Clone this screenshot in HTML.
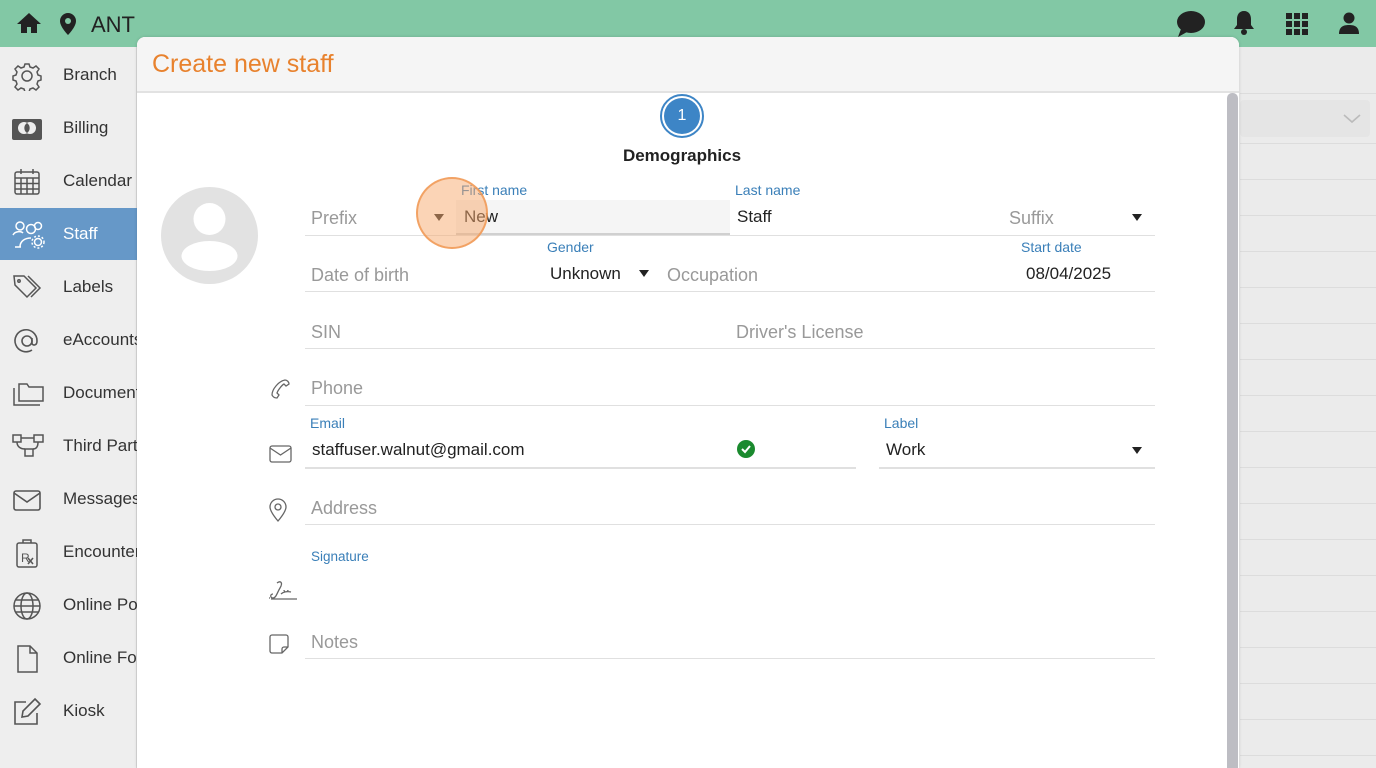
<!DOCTYPE html>
<html><head><meta charset="utf-8">
<style>
*{box-sizing:border-box;margin:0;padding:0}
body{width:1376px;height:768px;overflow:hidden;position:relative;background:#ebebeb;font-family:"Liberation Sans",Arial,sans-serif;color:#222}
.a{position:absolute}
#top{left:0;top:0;width:1376px;height:47px;background:#82c8a5}
#side{left:0;top:47px;width:137px;height:721px;background:#eeeeee;border-right:1px solid #d8d8d8}
.nav{position:absolute;left:0;width:137px;height:52px;overflow:hidden;white-space:nowrap}
.nav span{position:absolute;left:63px;top:16px;font-size:17px;color:#333}
.nav svg{position:absolute;left:12px;top:12px}
.nav.on{background:#6698c8}
.nav.on span{color:#fff}
#modal{left:137px;top:37px;width:1102px;height:731px;background:#fff;border-radius:8px 8px 0 0;box-shadow:0 0 3px rgba(0,0,0,.15)}
#mh{left:0;top:0;width:1102px;height:56px;background:#f5f5f5;border-bottom:2px solid #e2e2e2;border-radius:8px 8px 0 0}
#mh div{position:absolute;left:15px;top:13px;font-size:25px;color:#e8822e}
.ln{position:absolute;height:1px;background:#e0e0e0}
.ph{position:absolute;font-size:18px;color:#999}
.lb{position:absolute;font-size:14px;color:#3a7fb8}
.v{position:absolute;font-size:17px;color:#222}
.tri{position:absolute;width:0;height:0;border-left:5px solid transparent;border-right:5px solid transparent;border-top:7px solid #222}
.rl{position:absolute;left:1240px;width:136px;height:1px;background:#dcdcdc}
</style></head><body>
<div id="top" class="a">
<svg class="a" style="left:16px;top:12px" width="26" height="22" viewBox="0 0 26 22"><path d="M13 1L1 12h4v9h6v-6h4v6h6v-9h4z" fill="#222"/></svg>
<svg class="a" style="left:59px;top:12px" width="18" height="24" viewBox="0 0 18 24"><path d="M9 1a8 8 0 0 0-8 8c0 6 8 14 8 14s8-8 8-14a8 8 0 0 0-8-8z" fill="#222"/><circle cx="9" cy="9" r="3" fill="#82c8a5"/></svg>
<div class="a" style="left:91px;top:12px;font-size:22px;color:#222">ANT</div>
<svg class="a" style="left:1176px;top:10px" width="30" height="27" viewBox="0 0 30 27"><ellipse cx="15" cy="12" rx="14" ry="11" fill="#222"/><path d="M5 19L2 27l9-5z" fill="#222"/></svg>
<svg class="a" style="left:1233px;top:10px" width="22" height="26" viewBox="0 0 22 26"><path d="M11 1c-5 0-7 4-7 8v6l-3 4h20l-3-4V9c0-4-2-8-7-8z" fill="#222"/><circle cx="11" cy="22" r="3" fill="#222"/></svg>
<svg class="a" style="left:1286px;top:13px" width="22" height="22" viewBox="0 0 22 22" fill="#222"><rect x="0" y="0" width="6" height="6"/><rect x="8" y="0" width="6" height="6"/><rect x="16" y="0" width="6" height="6"/><rect x="0" y="8" width="6" height="6"/><rect x="8" y="8" width="6" height="6"/><rect x="16" y="8" width="6" height="6"/><rect x="0" y="16" width="6" height="6"/><rect x="8" y="16" width="6" height="6"/><rect x="16" y="16" width="6" height="6"/></svg>
<svg class="a" style="left:1339px;top:12px" width="20" height="22" viewBox="0 0 20 22" fill="#222"><circle cx="10" cy="6" r="5.5"/><path d="M0 22c0-7 4-9 10-9s10 2 10 9z"/></svg>
</div>

<div id="side" class="a">
<div class="nav" style="top:2px"><svg width="30" height="30" viewBox="0 0 30 30" fill="none" stroke="#555" stroke-width="1.5"><circle cx="15" cy="15" r="5"/><path d="M13 3h4l1 3 3 1 3-2 3 3-2 3 1 3 3 1v4l-3 1-1 3 2 3-3 3-3-2-3 1-1 3h-4l-1-3-3-1-3 2-3-3 2-3-1-3-3-1v-4l3-1 1-3-2-3 3-3 3 2 3-1z"/></svg><span>Branch</span></div>
<div class="nav" style="top:55px"><svg width="30" height="30" viewBox="0 0 30 30"><rect x="0" y="5" width="30" height="21" rx="2" fill="#555"/><circle cx="12" cy="14" r="6" fill="#eee"/><circle cx="18" cy="14" r="6" fill="#eee"/><path d="M15 9a6 6 0 0 1 0 10a6 6 0 0 1 0-10" fill="#555"/></svg><span>Billing</span></div>
<div class="nav" style="top:108px"><svg width="30" height="30" viewBox="0 0 30 30" fill="none" stroke="#555" stroke-width="1.5"><rect x="3" y="5" width="24" height="22" rx="2"/><path d="M3 11h24M3 16.5h24M3 22h24M9 11v16M15 11v16M21 11v16M9 2v5M21 2v5"/></svg><span>Calendar</span></div>
<div class="nav on" style="top:161px"><svg width="34" height="30" viewBox="0 0 34 30" fill="none" stroke="#fff" stroke-width="1.5"><circle cx="8" cy="6" r="4"/><circle cx="19" cy="9" r="4.5"/><path d="M1 15c2-4 8-4 10-2M8 27c0-6 5-9 11-9M3 27h6"/><circle cx="26" cy="22" r="3.5"/><circle cx="26" cy="22" r="6" stroke-dasharray="2 2"/><circle cx="26" cy="6" r="3.5"/></svg><span>Staff</span></div>
<div class="nav" style="top:214px"><svg width="30" height="30" viewBox="0 0 30 30" fill="none" stroke="#555" stroke-width="1.5"><path d="M2 3h10l12 12-9 9L3 12z"/><circle cx="7" cy="8" r="1.2"/><path d="M16 3l12 12-9 9"/></svg><span>Labels</span></div>
<div class="nav" style="top:267px"><svg width="30" height="30" viewBox="0 0 30 30" fill="none" stroke="#555" stroke-width="1.6"><circle cx="15" cy="15" r="5"/><path d="M20 12v5c0 3 5 3 5-2a11 11 0 1 0-5 9"/></svg><span>eAccounts</span></div>
<div class="nav" style="top:320px"><svg width="34" height="30" viewBox="0 0 34 30" fill="none" stroke="#555" stroke-width="1.5"><path d="M7 5h8l2 3h14v14H7zM2 9v17h26"/></svg><span>Documents</span></div>
<div class="nav" style="top:373px"><svg width="32" height="30" viewBox="0 0 32 30" fill="none" stroke="#555" stroke-width="1.5"><rect x="1" y="3" width="8" height="7"/><rect x="22" y="3" width="9" height="7"/><rect x="13" y="17" width="8" height="7"/><path d="M9 6h13M5 10c0 5 4 7 8 7M26 10c0 5-2 7-5 7"/></svg><span>Third Party</span></div>
<div class="nav" style="top:426px"><svg width="30" height="30" viewBox="0 0 30 30" fill="none" stroke="#555" stroke-width="1.6"><rect x="2" y="6" width="26" height="19" rx="2"/><path d="M2 8l13 9 13-9"/></svg><span>Messages</span></div>
<div class="nav" style="top:479px"><svg width="30" height="30" viewBox="0 0 30 30" fill="none" stroke="#555" stroke-width="1.5"><rect x="5" y="5" width="20" height="24" rx="2"/><path d="M11 5V2h8v3"/><text x="9" y="24" font-size="12" fill="#555" stroke="none" font-family="Liberation Sans">R</text><path d="M16 20l5 6M21 20l-5 6"/></svg><span>Encounters</span></div>
<div class="nav" style="top:532px"><svg width="30" height="30" viewBox="0 0 30 30" fill="none" stroke="#555" stroke-width="1.5"><circle cx="15" cy="15" r="13"/><ellipse cx="15" cy="15" rx="6" ry="13"/><path d="M2 15h26M4 9h22M4 21h22"/></svg><span>Online Portal</span></div>
<div class="nav" style="top:585px"><svg width="30" height="30" viewBox="0 0 30 30" fill="none" stroke="#555" stroke-width="1.5"><path d="M6 2h12l7 7v19H6z"/><path d="M18 2v7h7"/></svg><span>Online Forms</span></div>
<div class="nav" style="top:638px"><svg width="30" height="30" viewBox="0 0 30 30" fill="none" stroke="#555" stroke-width="1.6"><path d="M14 5H3v22h22V16"/><path d="M23 2l5 5-12 12-6 1 1-6z"/></svg><span>Kiosk</span></div>
</div>

<div class="a" style="left:1240px;top:47px;width:136px;height:47px;background:#ebebeb;border-bottom:1px solid #dcdcdc"></div>
<div class="a" style="left:1240px;top:100px;width:130px;height:37px;background:#e5e5e5;border-radius:4px"></div>
<svg class="a" style="left:1343px;top:114px" width="18" height="10" viewBox="0 0 18 10"><path d="M1 1l8 7 8-7" fill="none" stroke="#bbb" stroke-width="1.6"/></svg>
<div class="rl" style="top:143px"></div><div class="rl" style="top:179px"></div><div class="rl" style="top:215px"></div><div class="rl" style="top:251px"></div><div class="rl" style="top:287px"></div><div class="rl" style="top:323px"></div><div class="rl" style="top:359px"></div><div class="rl" style="top:395px"></div><div class="rl" style="top:431px"></div><div class="rl" style="top:467px"></div><div class="rl" style="top:503px"></div><div class="rl" style="top:539px"></div><div class="rl" style="top:575px"></div><div class="rl" style="top:611px"></div><div class="rl" style="top:647px"></div><div class="rl" style="top:683px"></div><div class="rl" style="top:719px"></div><div class="rl" style="top:755px"></div>

<div id="modal" class="a">
<div id="mh" class="a"><div>Create new staff</div></div>
<div class="a" style="left:1090px;top:56px;width:11px;height:675px;background:#bdbdc3;border-radius:5px 5px 0 0"></div>
</div>

<div class="a" style="left:660px;top:94px;width:44px;height:44px;border-radius:50%;border:2px solid #3d85c6;background:#fff"></div>
<div class="a" style="left:664px;top:98px;width:36px;height:36px;border-radius:50%;background:#3d85c6;color:#fff;font-size:16px;text-align:center;line-height:36px">1</div>
<div class="a" style="left:582px;top:146px;width:200px;text-align:center;font-size:17px;font-weight:bold;color:#222">Demographics</div>

<svg class="a" style="left:161px;top:187px" width="97" height="97" viewBox="0 0 97 97"><circle cx="48.5" cy="48.5" r="48.5" fill="#e2e2e2"/><circle cx="48.5" cy="32" r="16" fill="#fff"/><ellipse cx="48.5" cy="69" rx="28" ry="15" fill="#fff"/></svg>

<div class="ph" style="left:311px;top:208px">Prefix</div>
<div class="tri" style="left:434px;top:214px"></div>
<div class="lb" style="left:461px;top:182px">First name</div>
<div class="a" style="left:456px;top:200px;width:274px;height:35px;background:#f5f5f5;border-bottom:2px solid #d0d0d0"></div>
<div class="v" style="left:464px;top:207px">New</div>
<div class="lb" style="left:735px;top:182px">Last name</div>
<div class="v" style="left:737px;top:207px">Staff</div>
<div class="ph" style="left:1009px;top:208px">Suffix</div>
<div class="tri" style="left:1132px;top:214px"></div>
<div class="ln" style="left:305px;top:235px;width:850px"></div>
<div class="ph" style="left:311px;top:265px">Date of birth</div>
<div class="lb" style="left:547px;top:239px">Gender</div>
<div class="v" style="left:550px;top:264px">Unknown</div>
<div class="tri" style="left:639px;top:270px"></div>
<div class="ph" style="left:667px;top:265px">Occupation</div>
<div class="lb" style="left:1021px;top:239px">Start date</div>
<div class="v" style="left:1026px;top:264px">08/04/2025</div>
<div class="ln" style="left:305px;top:291px;width:850px"></div>
<div class="ph" style="left:311px;top:322px">SIN</div>
<div class="ph" style="left:736px;top:322px">Driver's License</div>
<div class="ln" style="left:305px;top:348px;width:850px"></div>
<svg class="a" style="left:268px;top:378px" width="24" height="24" viewBox="0 0 24 24" fill="none" stroke="#666" stroke-width="1.3"><path d="M17 2c2 0 4 2 4 4l-3 2-2-2c-2 1-6 6-7 9l2 2-2 3c-2 0-4-1-5-3C4 11 11 3 17 2z"/></svg>
<div class="ph" style="left:311px;top:378px">Phone</div>
<div class="ln" style="left:305px;top:405px;width:850px"></div>
<svg class="a" style="left:269px;top:445px" width="23" height="18" viewBox="0 0 23 18" fill="none" stroke="#666" stroke-width="1.3"><rect x="1" y="1" width="21" height="16" rx="2"/><path d="M1 3l10.5 7L22 3"/></svg>
<div class="lb" style="left:310px;top:415px">Email</div>
<div class="v" style="left:312px;top:440px">staffuser.walnut@gmail.com</div>
<svg class="a" style="left:737px;top:440px" width="18" height="18" viewBox="0 0 18 18"><circle cx="9" cy="9" r="9" fill="#1a8a2e"/><path d="M5 9l3 3 5-6" fill="none" stroke="#fff" stroke-width="2"/></svg>
<div class="ln" style="left:305px;top:467px;width:551px;height:2px"></div>
<div class="lb" style="left:884px;top:415px">Label</div>
<div class="v" style="left:886px;top:440px">Work</div>
<div class="tri" style="left:1132px;top:447px"></div>
<div class="ln" style="left:879px;top:467px;width:276px;height:2px"></div>
<svg class="a" style="left:268px;top:498px" width="20" height="24" viewBox="0 0 20 24" fill="none" stroke="#666" stroke-width="1.3"><path d="M10 1a8 8 0 0 0-8 8c0 5 8 14 8 14s8-9 8-14a8 8 0 0 0-8-8z"/><circle cx="10" cy="9" r="3"/></svg>
<div class="ph" style="left:311px;top:498px">Address</div>
<div class="ln" style="left:305px;top:524px;width:850px"></div>
<div class="lb" style="left:311px;top:549px;font-size:13.5px">Signature</div>
<svg class="a" style="left:268px;top:580px" width="30" height="22" viewBox="0 0 30 22" fill="none" stroke="#666" stroke-width="1.3"><path d="M9 3c4-3 6 0 3 5s-4 10-7 10-3-4 0-4M16 10c0 3 4 2 4 0M13 14c2-2 6-3 10-2M3 19h26M1 18h1"/></svg>
<svg class="a" style="left:269px;top:634px" width="20" height="20" viewBox="0 0 20 20" fill="none" stroke="#666" stroke-width="1.3"><path d="M3 1h14a2 2 0 0 1 2 2v10l-6 6H3a2 2 0 0 1-2-2V3a2 2 0 0 1 2-2zM19 13h-4a2 2 0 0 0-2 2v4"/></svg>
<div class="ph" style="left:311px;top:632px">Notes</div>
<div class="ln" style="left:305px;top:658px;width:850px"></div>

<div class="a" style="left:416px;top:177px;width:72px;height:72px;border-radius:50%;background:rgba(248,170,110,.5);border:2px solid rgba(240,150,80,.8)"></div>
</body></html>
